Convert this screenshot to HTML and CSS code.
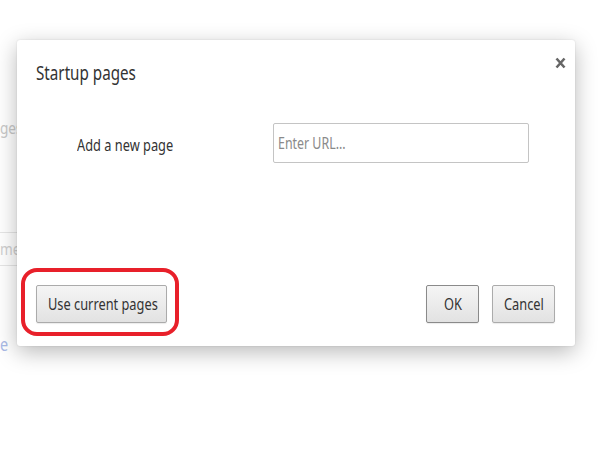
FILE: index.html
```html
<!DOCTYPE html>
<html>
<head>
<meta charset="utf-8">
<link rel="stylesheet" href="styles.css">
</head>
<body>
<div class="page">
  <div class="bg-heading"><span class="cond">ges</span></div>
  <div class="bg-input"><span class="cond">me</span></div>
  <div class="bg-link"><span class="cond">e</span></div>
</div>
<div class="dialog">
  <div class="dlg-header">
    <div class="dlg-title"><span class="cond">Startup pages</span></div>
    <svg class="close" width="11" height="12" viewBox="0 0 11 12"><path d="M1.5 1.5 L9.5 10.5 M9.5 1.5 L1.5 10.5" stroke="#666" stroke-width="2.6" fill="none"/></svg>
  </div>
  <div class="dlg-body">
    <div class="label"><span class="cond">Add a new page</span></div>
    <div class="url-input"><span class="cond">Enter URL...</span></div>
  </div>
  <div class="dlg-footer">
    <button class="btn btn-current"><span class="cond">Use current pages</span></button>
    <div class="spacer"></div>
    <button class="btn btn-ok"><span class="cond">OK</span></button>
    <button class="btn btn-cancel"><span class="cond">Cancel</span></button>
  </div>
  <div class="highlight"></div>
</div>
</body>
</html>
```
FILE: styles.css
```css
html, body {
  margin: 0;
  padding: 0;
  background: #ffffff;
  width: 600px;
  height: 450px;
  overflow: hidden;
  font-family: "Noto Sans", "Open Sans", sans-serif;
}
.cond {
  display: inline-block;
  white-space: nowrap;
  transform: scaleX(0.8);
  transform-origin: left center;
}
.page {
  display: flex;
  flex-direction: column;
  align-items: flex-start;
  width: 40px;
  padding-top: 116px;
  color: #c8c8c8;
  font-size: 17px;
}
.bg-heading {
  line-height: 24px;
}
.bg-input {
  margin-top: 92px;
  height: 34px;
  width: 30px;
  border: 1px solid #e6e6e6;
  border-left: none;
  box-sizing: border-box;
  line-height: 32px;
  color: #d0d0d0;
}
.bg-link {
  margin-top: 66px;
  color: #a9b9e6;
  font-size: 18px;
}
.dialog {
  position: absolute;
  left: 17px;
  top: 40px;
  width: 558px;
  height: 306px;
  background: #fff;
  border-radius: 3px;
  box-shadow: 0 6px 22px rgba(0,0,0,0.28), 0 0 2px rgba(0,0,0,0.12);
  display: flex;
  flex-direction: column;
  box-sizing: border-box;
  color: #333;
}
.dlg-header {
  display: flex;
  justify-content: space-between;
  align-items: flex-start;
  padding: 20px 9px 0 19px;
}
.dlg-title {
  font-size: 19px;
  line-height: 26px;
  color: #333;
}
.close {
  margin-top: -3px;
}
.dlg-body {
  display: flex;
  align-items: center;
  margin-top: 37px;
  padding-left: 60px;
}
.label {
  font-size: 16px;
  width: 196px;
  padding-top: 3px;
  color: #333;
}
.url-input {
  width: 256px;
  height: 40px;
  box-sizing: border-box;
  border: 1px solid #c4c4c4;
  border-radius: 2px;
  font-size: 15.5px;
  color: #8a8a8a;
  line-height: 38px;
  padding-left: 4px;
}
.dlg-footer {
  margin-top: auto;
  display: flex;
  align-items: center;
  padding: 0 20px 23px 19px;
}
.spacer {
  flex: 1;
}
.btn {
  font-family: inherit;
  height: 38px;
  box-sizing: border-box;
  border: 1px solid #ababab;
  border-radius: 2px;
  background: linear-gradient(#f5f5f5, #e2e2e2);
  color: #333;
  font-size: 16px;
  padding: 0;
  box-shadow: 0 1px 1px rgba(0,0,0,0.08);
  text-align: left;
}
.btn-current {
  width: 131px;
  padding-left: 11px;
}
.btn-ok {
  width: 53px;
  border-color: #8a8a8a;
  padding-left: 17px;
}
.btn-cancel {
  width: 63px;
  margin-left: 13px;
  padding-left: 11px;
}
.highlight {
  position: absolute;
  left: 4px;
  top: 228px;
  width: 158px;
  height: 68px;
  box-sizing: border-box;
  border: 4px solid #e8202a;
  border-radius: 16px;
}
```
